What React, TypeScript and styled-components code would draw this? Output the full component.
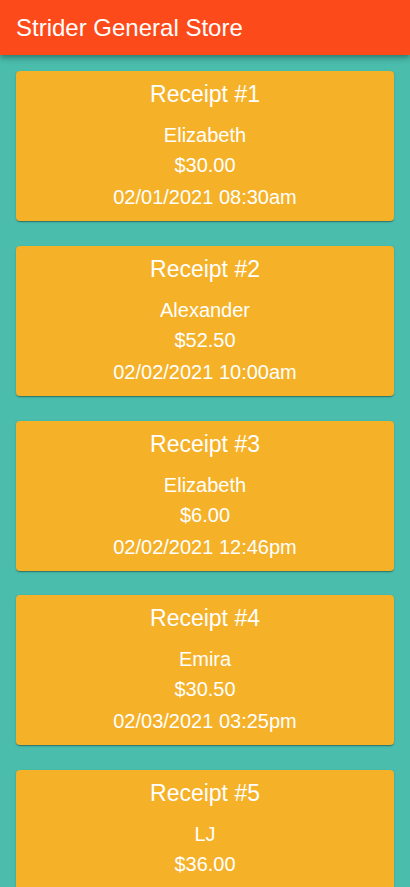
import React from "react";
import styled, { createGlobalStyle } from "styled-components";

const Global = createGlobalStyle`
  html, body {
    margin: 0;
    padding: 0;
    background: #4abdac;
    font-family: "Liberation Sans", Arial, sans-serif;
  }
`;

const Page = styled.div`
  min-height: 100vh;
  background: #4abdac;
`;

const Header = styled.header`
  height: 55px;
  background: #fc4a1a;
  display: flex;
  align-items: center;
  padding: 0 16px;
  box-shadow: 0 2px 4px -1px rgba(0, 0, 0, 0.2), 0 4px 5px 0 rgba(0, 0, 0, 0.14),
    0 1px 10px 0 rgba(0, 0, 0, 0.12);
  position: relative;
  z-index: 1;
`;

const Title = styled.h1`
  margin: 0;
  font-size: 24px;
  font-weight: 400;
  color: #fff;
  line-height: 1;
`;

const List = styled.main`
  display: flex;
  flex-direction: column;
  gap: 24.75px;
  padding: 16px;
`;

const Card = styled.section`
  background: #f5b128;
  border-radius: 4px;
  box-shadow: 0 2px 1px -1px rgba(0, 0, 0, 0.2), 0 1px 1px 0 rgba(0, 0, 0, 0.14),
    0 1px 3px 0 rgba(0, 0, 0, 0.12);
  padding: 7px 0 9px;
  display: flex;
  flex-direction: column;
  align-items: center;
  color: #fff;
  text-align: center;
`;

const CardTitle = styled.h2`
  margin: 0 0 10px;
  font-size: 23px;
  font-weight: 400;
  line-height: 32px;
`;

const Line = styled.div<{ $gap?: number }>`
  font-size: 20px;
  line-height: 30px;
  margin-top: ${(p) => p.$gap ?? 0}px;
`;

const receipts = [
  { id: 1, name: "Elizabeth", amount: "$30.00", date: "02/01/2021 08:30am" },
  { id: 2, name: "Alexander", amount: "$52.50", date: "02/02/2021 10:00am" },
  { id: 3, name: "Elizabeth", amount: "$6.00", date: "02/02/2021 12:46pm" },
  { id: 4, name: "Emira", amount: "$30.50", date: "02/03/2021 03:25pm" },
  { id: 5, name: "LJ", amount: "$36.00", date: "02/03/2021 05:10pm" },
];

export default function App() {
  return (
    <Page>
      <Global />
      <Header>
        <Title>Strider General Store</Title>
      </Header>
      <List>
        {receipts.map((r) => (
          <Card key={r.id}>
            <CardTitle>Receipt #{r.id}</CardTitle>
            <Line>{r.name}</Line>
            <Line>{r.amount}</Line>
            <Line $gap={2}>{r.date}</Line>
          </Card>
        ))}
      </List>
    </Page>
  );
}
